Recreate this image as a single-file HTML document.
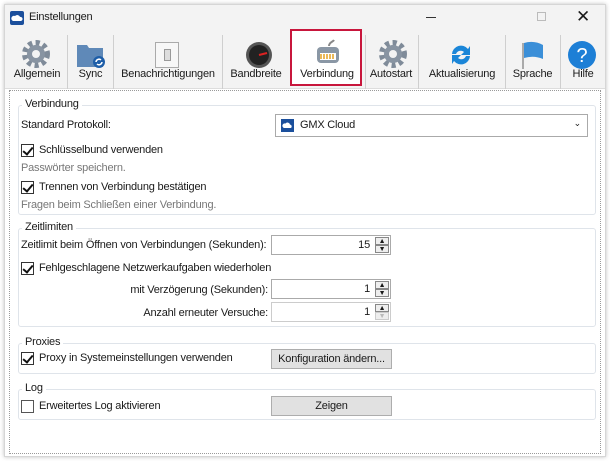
<!DOCTYPE html>
<html><head><meta charset="utf-8"><style>
*{box-sizing:border-box;margin:0;padding:0}
body{width:610px;height:461px;background:#fff;font-family:"Liberation Sans",sans-serif;font-size:11px;letter-spacing:-0.2px;color:#1a1a1a;position:relative;overflow:hidden}
div,span{white-space:nowrap}
.win{position:absolute;left:4px;top:4px;width:602px;height:453px;background:#fff;border:1px solid #d6d6d6;box-shadow:0 0 4px rgba(0,0,0,.25)}
.a{position:absolute}
.title{left:0;top:0;width:600px;height:27px;background:#f3f3f3}
.tb{left:0;top:27px;width:600px;height:57px;background:#f3f3f3;border-bottom:1px solid #ddd}
.sep{position:absolute;top:30px;width:1px;height:54px;background:#cfcfcf}
.lbl{position:absolute;top:63px;text-align:center}
.pane{left:4px;top:85px;width:592px;height:364px;border:1px dotted #999}
.grp{position:absolute;border:1px solid #dfe4ea;border-radius:3px}
.gt{position:absolute;background:#fff;padding:0 3px}
.cb{position:absolute;width:13px;height:13px;border:1px solid #333;background:#fff}
.cb.c::after{content:"";position:absolute;left:3px;top:0px;width:4px;height:8px;border:solid #111;border-width:0 2px 2px 0;transform:rotate(40deg)}
.gray{color:#777}
.spin{position:absolute;height:20px;border:1px solid #aaa;background:#fff;text-align:right;padding-right:20px;line-height:18px}
.spin i{position:absolute;right:1px;width:14px;height:8px;border:1px solid #888;background:#eee;font-style:normal;font-size:7px;line-height:7px;text-align:center}
.btn{position:absolute;width:121px;height:20px;border:1px solid #adadad;background:#e1e1e1;text-align:center;line-height:18px}
</style></head><body>
<div class="win">
<div class="a title"></div>
<svg class="a" style="left:5px;top:6px" width="14" height="14"><rect width="14" height="14" rx="2" fill="#1b4f9c"/><path d="M3 10h8a2 2 0 0 0-1-4 3 3 0 0 0-5-1 2.5 2.5 0 0 0-2 5z" fill="#fff"/></svg>
<div class="a" style="left:24px;top:6px">Einstellungen</div>
<div class="a" style="left:421px;top:12px;width:10px;height:1px;background:#333"></div>
<div class="a" style="left:532px;top:7px;width:9px;height:9px;border:1px solid #bbb"></div>
<div class="a" style="left:571px;top:2px;font-size:17px">✕</div>
<div class="a tb"></div>
<div class="sep" style="left:62px"></div><div class="sep" style="left:108px"></div><div class="sep" style="left:217px"></div><div class="sep" style="left:413px"></div><div class="sep" style="left:500px"></div><div class="sep" style="left:555px"></div><div class="sep" style="left:360px"></div>
<svg class="a" style="left:16px;top:34px" width="30" height="30" viewBox="0 0 30 30"><circle cx="15" cy="15" r="11" fill="none" stroke="#7f8b99" stroke-width="6" stroke-dasharray="4 3.3"/><circle cx="15" cy="15" r="9" fill="#8894a2"/><circle cx="15" cy="15" r="4" fill="#f3f3f3"/></svg>
<svg class="a" style="left:70px;top:36px" width="32" height="28"><path d="M2 4h10l2 3h14v19H2z" fill="#5f89b8"/><circle cx="24" cy="21" r="6" fill="#1e5ea8"/><path d="M21 21a3 3 0 0 1 5-2M27 21a3 3 0 0 1-5 2" stroke="#fff" fill="none" stroke-width="1.5"/></svg>
<div class="a" style="left:150px;top:37px;width:24px;height:26px;border:1px solid #aaa;background:#f7f7f7"><div style="margin:6px auto;width:7px;height:12px;border:1px solid #999;background:#ddd"></div></div>
<svg class="a" style="left:239px;top:35px" width="30" height="30"><circle cx="15" cy="15" r="13" fill="#555"/><circle cx="15" cy="15" r="10" fill="#222"/><path d="M15 15l8-2" stroke="#d22" stroke-width="2"/></svg>
<div class="a" style="left:285px;top:24px;width:72px;height:57px;border:2px solid #c8163c;background:#fff"></div>
<svg class="a" style="left:308px;top:33px" width="30" height="28"><path d="M16 8c0-4 4-4 5-6" stroke="#888" fill="none" stroke-width="2"/><rect x="4" y="9" width="22" height="16" rx="4" fill="#8a97a5"/><rect x="7" y="15" width="16" height="7" fill="#fff"/><path d="M8 16v5M11 16v5M14 16v5M17 16v5M20 16v5" stroke="#e3a020" stroke-width="1.5"/></svg>
<svg class="a" style="left:373px;top:34px" width="30" height="30" viewBox="0 0 30 30"><circle cx="15" cy="15" r="11" fill="none" stroke="#7f8b99" stroke-width="6" stroke-dasharray="4 3.3"/><circle cx="15" cy="15" r="9" fill="#8894a2"/><circle cx="15" cy="15" r="4" fill="#f3f3f3"/></svg>
<svg class="a" style="left:442px;top:36px" width="28" height="28"><path d="M5 13a9 9 0 0 1 16-5l2-3v9h-9l3-3a5 5 0 0 0-8 2z" fill="#1b86d8"/><path d="M23 15a9 9 0 0 1-16 5l-2 3v-9h9l-3 3a5 5 0 0 0 8-2z" fill="#1b86d8"/></svg>
<svg class="a" style="left:514px;top:34px" width="28" height="32"><path d="M4 4v26" stroke="#aaa" stroke-width="2"/><path d="M5 4q10-3 19 2v14q-9-4-19-1z" fill="#3b8fd8"/></svg>
<svg class="a" style="left:562px;top:35px" width="30" height="30"><circle cx="15" cy="15" r="14" fill="#1d7fd6"/><text x="15" y="22" font-size="20" fill="#fff" text-anchor="middle" font-family="Liberation Sans">?</text></svg>
<div class="lbl" style="left:4px;width:56px">Allgemein</div>
<div class="lbl" style="left:63px;width:45px">Sync</div>
<div class="lbl" style="left:110px;width:106px">Benachrichtigungen</div>
<div class="lbl" style="left:218px;width:66px">Bandbreite</div>
<div class="lbl" style="left:287px;width:70px">Verbindung</div>
<div class="lbl" style="left:360px;width:52px">Autostart</div>
<div class="lbl" style="left:413px;width:88px">Aktualisierung</div>
<div class="lbl" style="left:500px;width:55px">Sprache</div>
<div class="lbl" style="left:556px;width:44px">Hilfe</div>
<div class="a pane"></div>
<div class="grp" style="left:13px;top:100px;width:578px;height:110px"></div><div class="gt" style="left:17px;top:93px">Verbindung</div>
<div class="a" style="left:16px;top:114px">Standard Protokoll:</div>
<div class="a" style="left:270px;top:109px;width:313px;height:23px;border:1px solid #aaa;background:#fff"><svg class="a" style="left:5px;top:4px" width="13" height="13"><rect width="13" height="13" fill="#1b4f9c"/><path d="M3 9h7a2 2 0 0 0-1-3.5 2.6 2.6 0 0 0-4.5-1 2.2 2.2 0 0 0-1.5 4.5z" fill="#fff"/></svg><span class="a" style="left:24px;top:4px">GMX Cloud</span><span class="a" style="right:6px;top:3px;font-size:9px">⌄</span></div>
<div class="cb c" style="left:16px;top:139px"></div><div class="a" style="left:34px;top:139px">Schlüsselbund verwenden</div>
<div class="a gray" style="left:16px;top:157px">Passwörter speichern.</div>
<div class="cb c" style="left:16px;top:176px"></div><div class="a" style="left:34px;top:176px">Trennen von Verbindung bestätigen</div>
<div class="a gray" style="left:16px;top:194px">Fragen beim Schließen einer Verbindung.</div>

<div class="grp" style="left:13px;top:223px;width:578px;height:99px"></div><div class="gt" style="left:17px;top:216px">Zeitlimiten</div>
<div class="a" style="left:16px;top:234px">Zeitlimit beim Öffnen von Verbindungen (Sekunden):</div>
<div class="spin" style="left:266px;top:230px;width:120px">15<i style="top:1px">▲</i><i style="top:9px">▼</i></div>
<div class="cb c" style="left:16px;top:257px"></div><div class="a" style="left:34px;top:257px">Fehlgeschlagene Netzwerkaufgaben wiederholen</div>
<div class="a" style="left:110px;top:279px;width:153px;text-align:right">mit Verzögerung (Sekunden):</div>
<div class="spin" style="left:266px;top:274px;width:120px">1<i style="top:1px">▲</i><i style="top:9px">▼</i></div>
<div class="a" style="left:110px;top:302px;width:153px;text-align:right">Anzahl erneuter Versuche:</div>
<div class="spin" style="left:266px;top:297px;width:120px;border-color:#ccc">1<i style="top:1px">▲</i><i style="top:9px;color:#bbb;border-color:#ccc">▼</i></div>

<div class="grp" style="left:13px;top:338px;width:578px;height:31px"></div><div class="gt" style="left:17px;top:331px">Proxies</div>
<div class="cb c" style="left:16px;top:347px"></div><div class="a" style="left:34px;top:347px">Proxy in Systemeinstellungen verwenden</div>
<div class="btn" style="left:266px;top:344px">Konfiguration ändern...</div>

<div class="grp" style="left:13px;top:384px;width:578px;height:31px"></div><div class="gt" style="left:17px;top:377px">Log</div>
<div class="cb" style="left:16px;top:395px;border-color:#555"></div><div class="a" style="left:34px;top:395px">Erweitertes Log aktivieren</div>
<div class="btn" style="left:266px;top:391px">Zeigen</div>
</div>
</body></html>
